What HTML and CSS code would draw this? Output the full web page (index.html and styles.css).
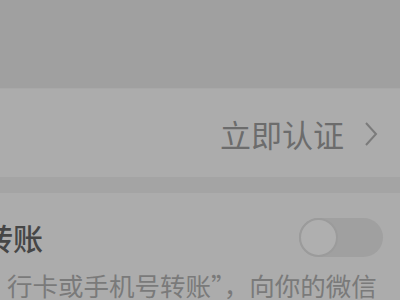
FILE: index.html
```html
<!DOCTYPE html>
<html lang="zh-Hans">
<head>
<meta charset="utf-8">
<link rel="stylesheet" href="styles.css">
</head>
<body>
<div class="screen">
  <div class="top"></div>
  <div class="row verify">
    <span class="action">立即认证</span>
    <svg class="chev" width="14" height="26" viewBox="0 0 14 26"><path d="M2 2 L12 13 L2 24" fill="none" stroke="#7b7b7b" stroke-width="2"/></svg>
  </div>
  <div class="band"></div>
  <div class="row transfer">
    <div class="head">
      <span class="title">转账</span>
      <span class="toggle"><span class="knob"></span></span>
    </div>
    <div class="sub">行卡或手机号转账”，向你的微信</div>
  </div>
</div>
</body>
</html>
```

FILE: styles.css
```css
html, body {
  margin: 0;
  padding: 0;
}
body {
  width: 400px;
  height: 300px;
  overflow: hidden;
  background: #ababab;
  font-family: "Noto Sans CJK SC", "Noto Sans", sans-serif;
}
.screen {
  display: flex;
  flex-direction: column;
  width: 400px;
}
.top {
  height: 88px;
  background: #a0a0a0;
}
.row {
  background: #acacac;
}
.verify {
  height: 89px;
  display: flex;
  align-items: center;
  justify-content: flex-end;
  padding-right: 22px;
  padding-top: 2px;
  box-sizing: border-box;
  border-top: 1px solid #a8a8a8;
}
.action {
  font-size: 31px;
  line-height: 40px;
  color: #6c6c6c;
}
.chev {
  margin-left: 20px;
  display: block;
}
.band {
  height: 16px;
  background: #a4a4a4;
}
.transfer {
  padding-top: 25px;
  height: 120px;
  box-sizing: border-box;
}
.head {
  display: flex;
  align-items: center;
  justify-content: space-between;
  height: 39px;
  padding-right: 17px;
}
.title {
  font-size: 30px;
  line-height: 39px;
  color: #464646;
  font-weight: 500;
  margin-left: -17px;
}
.toggle {
  width: 84px;
  height: 39px;
  border-radius: 20px;
  background: #a0a0a0;
  display: flex;
  align-items: center;
  box-sizing: border-box;
}
.knob {
  width: 39px;
  height: 39px;
  border-radius: 50%;
  background: #afafaf;
  border: 2px solid #9b9b9b;
  box-sizing: border-box;
}
.sub {
  margin-top: 10px;
  margin-left: 7px;
  font-size: 25.5px;
  line-height: 36px;
  color: #7a7a7a;
  white-space: nowrap;
}
```
